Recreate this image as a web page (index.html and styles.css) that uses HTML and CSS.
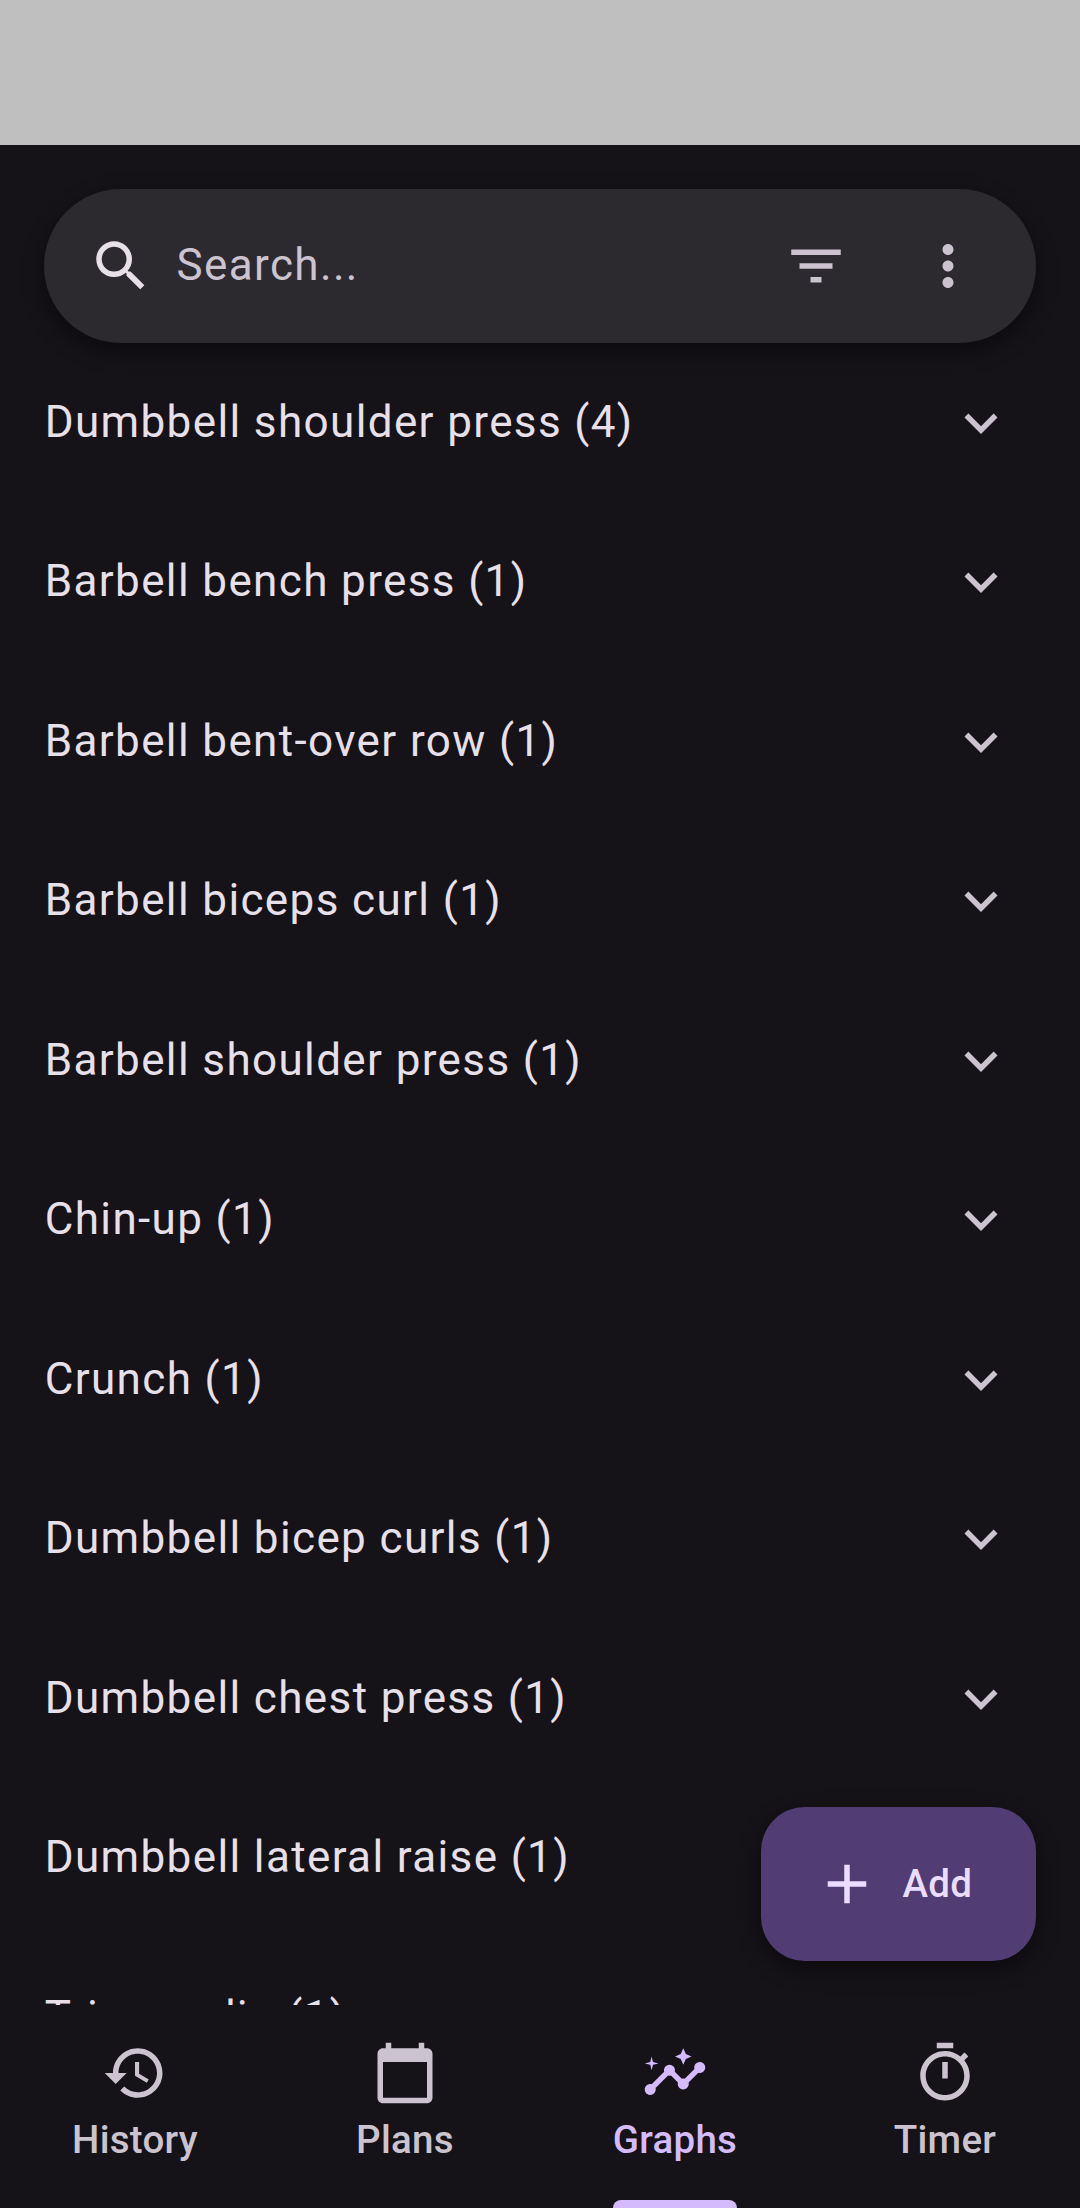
FILE: index.html
```html
<!DOCTYPE html>
<html lang="en">
<head>
<meta charset="utf-8">
<title>Graphs</title>
<link rel="stylesheet" href="styles.css">
</head>
<body>
<svg class="defs" width="0" height="0" aria-hidden="true">
  <symbol id="chevron" viewBox="0 0 24 24"><path d="M16.59 8.59 12 13.17 7.41 8.59 6 10l6 6 6-6z"/></symbol>
</svg>
<div class="app">
  <div class="status-bar"></div>
  <header class="search">
    <svg class="icon search-icon" viewBox="0 0 24 24"><path d="M15.5 14h-.79l-.28-.27C15.41 12.59 16 11.11 16 9.5 16 5.91 13.09 3 9.5 3S3 5.91 3 9.5 5.91 16 9.5 16c1.61 0 3.09-.59 4.23-1.57l.27.28v.79l5 4.99L20.49 19l-4.99-5zm-6 0C7.01 14 5 11.99 5 9.5S7.01 5 9.5 5 14 7.01 14 9.5 11.99 14 9.5 14z"/></svg>
    <span class="hint">Search...</span>
    <svg class="icon" viewBox="0 0 24 24"><path d="M10 18h4v-2h-4v2zM3 6v2h18V6H3zm3 7h12v-2H6v2z"/></svg>
    <svg class="icon" viewBox="0 0 24 24"><path d="M12 8c1.1 0 2-.9 2-2s-.9-2-2-2-2 .9-2 2 .9 2 2 2zm0 2c-1.1 0-2 .9-2 2s.9 2 2 2 2-.9 2-2-.9-2-2-2zm0 6c-1.1 0-2 .9-2 2s.9 2 2 2 2-.9 2-2-.9-2-2-2z"/></svg>
  </header>
  <main class="list">
    <div class="row"><span>Dumbbell shoulder press (4)</span><svg class="icon"><use href="#chevron"/></svg></div>
    <div class="row"><span>Barbell bench press (1)</span><svg class="icon"><use href="#chevron"/></svg></div>
    <div class="row"><span>Barbell bent-over row (1)</span><svg class="icon"><use href="#chevron"/></svg></div>
    <div class="row"><span>Barbell biceps curl (1)</span><svg class="icon"><use href="#chevron"/></svg></div>
    <div class="row"><span>Barbell shoulder press (1)</span><svg class="icon"><use href="#chevron"/></svg></div>
    <div class="row"><span>Chin-up (1)</span><svg class="icon"><use href="#chevron"/></svg></div>
    <div class="row"><span>Crunch (1)</span><svg class="icon"><use href="#chevron"/></svg></div>
    <div class="row"><span>Dumbbell bicep curls (1)</span><svg class="icon"><use href="#chevron"/></svg></div>
    <div class="row"><span>Dumbbell chest press (1)</span><svg class="icon"><use href="#chevron"/></svg></div>
    <div class="row"><span>Dumbbell lateral raise (1)</span><svg class="icon"><use href="#chevron"/></svg></div>
    <div class="row"><span>Triceps dip (1)</span><svg class="icon"><use href="#chevron"/></svg></div>
  </main>
  <nav class="tabs">
    <div class="tab">
      <svg class="icon" viewBox="0 0 24 24"><path d="M13 3c-4.97 0-9 4.03-9 9H1l3.89 3.89.07.14L9 12H6c0-3.87 3.13-7 7-7s7 3.13 7 7-3.13 7-7 7c-1.93 0-3.68-.79-4.94-2.06l-1.42 1.42C8.27 19.99 10.51 21 13 21c4.97 0 9-4.03 9-9s-4.03-9-9-9zm-1 5v5l4.28 2.54.72-1.21-3.5-2.08V8H12z"/></svg>
      <span>History</span>
    </div>
    <div class="tab">
      <svg class="icon" viewBox="0 0 24 24"><path d="M20 3h-1V1h-2v2H7V1H5v2H4c-1.1 0-2 .9-2 2v16c0 1.1.9 2 2 2h16c1.1 0 2-.9 2-2V5c0-1.1-.9-2-2-2zm0 18H4V8h16v13z"/></svg>
      <span>Plans</span>
    </div>
    <div class="tab active">
      <svg class="icon" viewBox="0 0 24 24"><path d="M21 8c-1.45 0-2.26 1.44-1.93 2.51l-3.55 3.56c-.3-.09-.74-.09-1.04 0l-2.55-2.55C12.27 10.45 11.46 9 10 9c-1.45 0-2.27 1.44-1.93 2.52l-4.56 4.55C2.44 15.74 1 16.55 1 18c0 1.1.9 2 2 2 1.45 0 2.26-1.44 1.93-2.51l4.55-4.56c.3.09.74.09 1.04 0l2.55 2.55C12.73 16.55 13.54 18 15 18c1.45 0 2.27-1.44 1.93-2.52l3.56-3.55C21.56 12.26 23 11.45 23 10c0-1.1-.9-2-2-2z"/><path d="M15 9l.94-2.07L18 6l-2.06-.93L15 3l-.92 2.07L12 6l2.08.93zM3.5 11L4 9l2-.5L4 8l-.5-2L3 8l-2 .5L3 9z"/></svg>
      <span>Graphs</span>
    </div>
    <div class="tab">
      <svg class="icon" viewBox="0 0 24 24"><path d="M15 1H9v2h6V1zm-4 13h2V8h-2v6zm8.03-6.61 1.42-1.42c-.43-.51-.9-.99-1.41-1.41l-1.42 1.42C16.07 4.74 14.12 4 12 4c-4.97 0-9 4.03-9 9s4.02 9 9 9 9-4.03 9-9c0-2.12-.74-4.07-1.97-5.61zM12 20c-3.87 0-7-3.13-7-7s3.13-7 7-7 7 3.13 7 7-3.13 7-7 7z"/></svg>
      <span>Timer</span>
    </div>
  </nav>
  <div class="fab">
    <svg class="icon" viewBox="0 0 24 24"><path d="M19 13h-6v6h-2v-6H5v-2h6V5h2v6h6v2z"/></svg>
    <span>Add</span>
  </div>
</div>
</body>
</html>
```
FILE: styles.css
```css
* {
  box-sizing: border-box;
}

body {
  margin: 0;
  background: #151218;
  color: #e7e0e8;
  font-family: Roboto, "Noto Sans", sans-serif;
}

.defs {
  display: block;
}

.app {
  position: relative;
  display: flex;
  flex-direction: column;
  width: 1080px;
  height: 2208px;
  overflow: hidden;
}

.icon {
  flex: none;
  width: 66px;
  height: 66px;
  fill: currentColor;
}

.status-bar {
  flex: none;
  height: 145px;
  background: #bfbfbf;
}

.search {
  flex: none;
  display: flex;
  align-items: center;
  gap: 66px;
  height: 154px;
  margin: 44px 44px 0;
  padding: 0 55px 0 44px;
  border-radius: 77px;
  background: #2c292f;
  color: #cbc4cf;
  box-shadow: 0 8px 22px rgba(0, 0, 0, 0.42);
}

.search-icon {
  color: #e7e0e8;
}

.hint {
  flex: 1;
  margin-left: -43.5px;
  padding-bottom: 2px;
  font-size: 44px;
  letter-spacing: 1.375px;
}

.list {
  flex: 1;
  min-height: 0;
  overflow: hidden;
}

.row {
  display: flex;
  align-items: center;
  justify-content: space-between;
  height: 159.5px;
  padding: 0 66px 0 44.7px;
  font-size: 44px;
  line-height: 66px;
  letter-spacing: 1.375px;
}

.row span {
  padding-bottom: 2px;
}

.row .icon {
  color: #cbc4cf;
}

.tabs {
  flex: none;
  display: grid;
  grid-template-columns: repeat(4, 1fr);
  height: 203px;
}

.tab {
  display: flex;
  flex-direction: column;
  align-items: center;
  padding-top: 35px;
  color: #cbc4cf;
  font-size: 38.5px;
  font-weight: 500;
  line-height: 55px;
  letter-spacing: 0.275px;
}

.tab span {
  margin-top: 6px;
}

.active {
  color: #d3bbfd;
}

.active::after {
  content: "";
  width: 124px;
  height: 8px;
  margin-top: auto;
  border-radius: 8px 8px 0 0;
  background: currentColor;
}

.fab {
  position: absolute;
  right: 44px;
  bottom: 247px;
  display: flex;
  align-items: center;
  gap: 22.5px;
  width: 275px;
  height: 154px;
  padding-left: 53px;
  border-radius: 44px;
  background: #513d73;
  color: #ebddff;
  font-size: 38.5px;
  font-weight: 500;
  letter-spacing: 0.275px;
  box-shadow: 0 8px 22px rgba(0, 0, 0, 0.42);
}

.fab span {
  padding-bottom: 1px;
}
```
